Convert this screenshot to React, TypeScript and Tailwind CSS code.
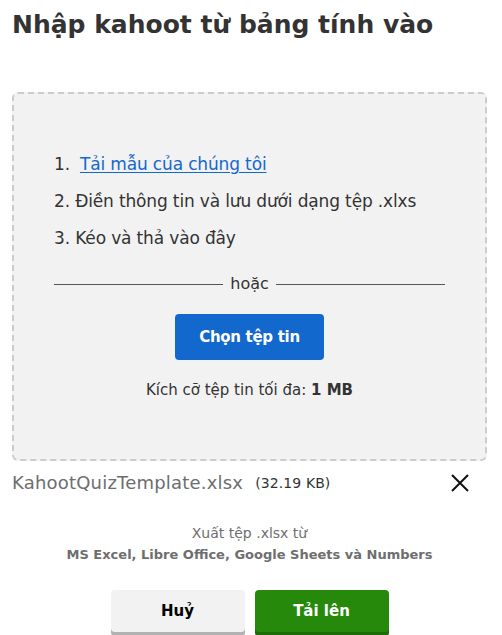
const font = { fontFamily: '"DejaVu Sans", "Noto Sans", sans-serif' };

export default function App() {
  return (
    <div className="h-[635px] w-[502px] overflow-hidden bg-white text-[#333333]" style={font}>
      <div className="ml-3 w-[475px] pt-[9px]">
        <h1 className="text-[25px] font-bold leading-[32px] text-[#333333]">
          Nhập kahoot từ bảng tính vào
        </h1>

        <div className="mt-[51px] flex h-[369px] flex-col items-center rounded-[6px] border-2 border-dashed border-[#cccccc] bg-[#f2f2f2] px-10 pt-[57px]">
          <ol className="flex w-full flex-col gap-[11px] text-[17px] leading-[26px] tracking-[-0.15px]">
            <li className="flex gap-[10px]">
              <span>1.</span>
              <a href="#" className="text-[#1368ce] underline underline-offset-2">
                Tải mẫu của chúng tôi
              </a>
            </li>
            <li>2. Điền thông tin và lưu dưới dạng tệp .xlxs</li>
            <li>3. Kéo và thả vào đây</li>
          </ol>

          <div className="mt-[23px] flex w-full items-center gap-[7px]">
            <div className="h-px flex-1 bg-[#555555]" />
            <span className="text-[16px] leading-5">hoặc</span>
            <div className="h-px flex-1 bg-[#555555]" />
          </div>

          <button className="mt-[20px] h-[46px] w-[149px] rounded-[4px] bg-[#1368ce] text-[15px] font-bold tracking-[-0.3px] text-white">
            Chọn tệp tin
          </button>

          <p className="mt-[20px] text-[15px] leading-5">
            Kích cỡ tệp tin tối đa: <span className="font-bold">1 MB</span>
          </p>
        </div>

        <div className="mt-[10px] flex items-center">
          <span className="text-[18px] leading-6 tracking-[0.2px] text-[#6e6e6e]">KahootQuizTemplate.xlsx</span>
          <span className="ml-[12px] text-[14px] leading-6 tracking-[0.1px]">(32.19 KB)</span>
          <svg className="ml-auto mr-[18px]" width="18" height="18" viewBox="0 0 18 18" fill="none" stroke="#111111" strokeWidth="2">
            <path d="M1 1 L17 17 M17 1 L1 17" />
          </svg>
        </div>

        <div className="mt-[28px] flex flex-col items-center leading-[21px] text-[#6e6e6e]">
          <span className="text-[14px]">Xuất tệp .xlsx từ</span>
          <span className="text-[13px] font-bold">MS Excel, Libre Office, Google Sheets và Numbers</span>
        </div>

        <div className="mt-[25px] flex justify-center gap-[10px]">
          <button className="h-[46px] w-[134px] rounded-[4px] bg-[#f2f2f2] pb-1 text-[15px] font-bold text-black shadow-[inset_0_-4px_0_#b2b2b2]">
            Huỷ
          </button>
          <button className="h-[46px] w-[134px] rounded-[4px] bg-[#26890c] pb-1 text-[15px] font-bold text-white shadow-[inset_0_-4px_0_#1d6b09]">
            Tải lên
          </button>
        </div>
      </div>
    </div>
  );
}
